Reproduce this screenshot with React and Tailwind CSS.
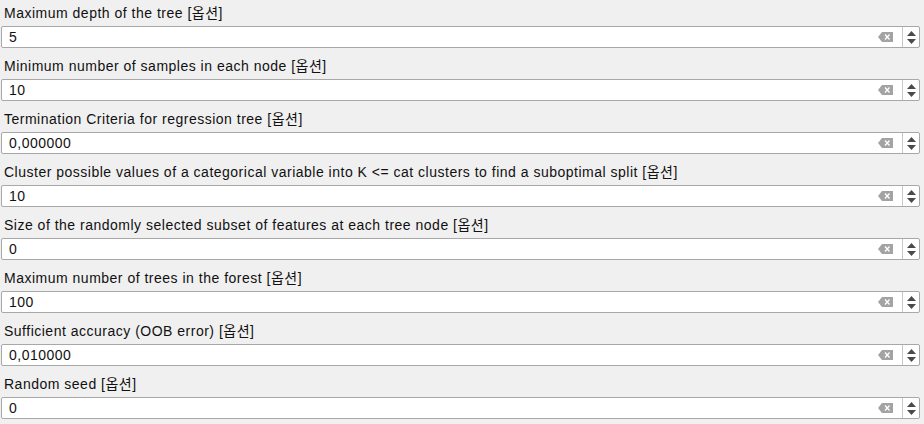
const fields = [
  { label: "Maximum depth of the tree [옵션]", value: "5" },
  { label: "Minimum number of samples in each node [옵션]", value: "10" },
  { label: "Termination Criteria for regression tree [옵션]", value: "0,000000" },
  {
    label:
      "Cluster possible values of a categorical variable into K <= cat clusters to find a suboptimal split [옵션]",
    value: "10",
  },
  { label: "Size of the randomly selected subset of features at each tree node [옵션]", value: "0" },
  { label: "Maximum number of trees in the forest [옵션]", value: "100" },
  { label: "Sufficient accuracy (OOB error) [옵션]", value: "0,010000" },
  { label: "Random seed [옵션]", value: "0" },
];

function ClearIcon() {
  return (
    <svg width="15" height="10" viewBox="0 0 15 10">
      <path d="M4 0 H15 V10 H4 L0 5 Z" fill="#a3a3a3" />
      <path d="M7 2.5 L11.5 7.5 M11.5 2.5 L7 7.5" stroke="#ffffff" strokeWidth="1.3" />
    </svg>
  );
}

function Spinner() {
  return (
    <div className="flex h-full w-[17px] flex-col items-center justify-center gap-[3px] border-l border-[#c8c8c8]">
      <svg width="9" height="5" viewBox="0 0 9 5">
        <path d="M4.5 0 L9 5 H0 Z" fill="#4a4a4a" />
      </svg>
      <svg width="9" height="5" viewBox="0 0 9 5">
        <path d="M0 0 H9 L4.5 5 Z" fill="#4a4a4a" />
      </svg>
    </div>
  );
}

function NumberField({ label, value }) {
  return (
    <div className="flex h-[53px] flex-col">
      <div className="flex h-[26px] items-center pl-[4px] text-[14px] tracking-[0.5px] text-[#111]">{label}</div>
      <div className="ml-[1px] mr-[4px] flex h-[22px] items-center rounded-[2px] border border-[#a8a8a8] bg-white">
        <div className="flex-1 pl-[7px] text-[14px] tracking-[0.5px] text-[#111]">{value}</div>
        <div className="mr-[9px] flex items-center">
          <ClearIcon />
        </div>
        <Spinner />
      </div>
    </div>
  );
}

export default function App() {
  return (
    <div
      className="h-[424px] w-[924px] overflow-hidden bg-[#f0f0f0]"
      style={{ fontFamily: '"Liberation Sans", Arial, "Noto Sans CJK KR", sans-serif' }}
    >
      {fields.map((f) => (
        <NumberField key={f.label} label={f.label} value={f.value} />
      ))}
    </div>
  );
}
